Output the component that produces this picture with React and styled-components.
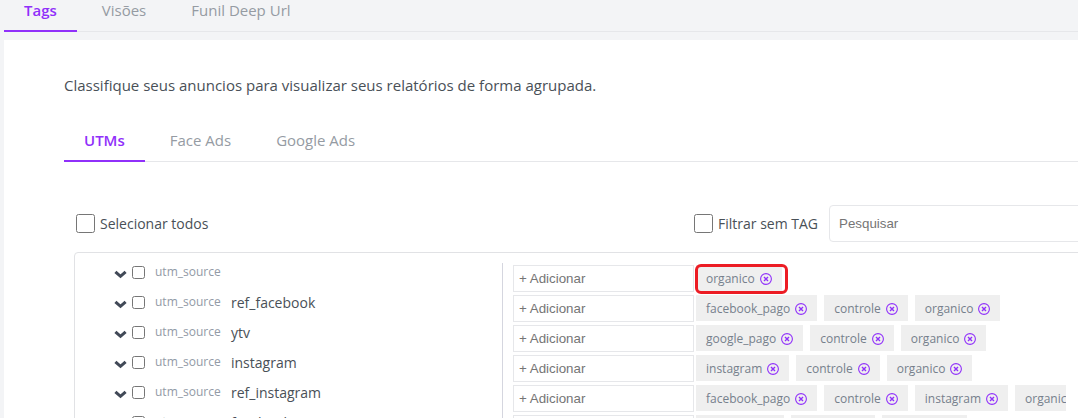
import React, { useState } from "react";

import styled, { createGlobalStyle, css } from "styled-components";

const GlobalStyle = createGlobalStyle`
  * {
    box-sizing: border-box;
  }

  body {
    margin: 0;
    background-color: #f3f4f6;
    color: #495057;
    font-family: "Open Sans", sans-serif;
    font-size: 15px;
    line-height: 22px;
    overflow: hidden;
  }
`;

const Page = styled.div`
  padding-left: 4px;
  overflow: hidden;
`;

const Tabs = styled.nav`
  display: flex;
  column-gap: 5px;
  box-shadow: inset 0 -1px 0 #e6e7ea;
`;

const Tab = styled.button`
  border: 0;
  border-bottom: 2px solid transparent;
  background: none;
  padding: 0 20px 10px;
  font: inherit;
  line-height: 20px;
  color: #959ba3;
  cursor: pointer;

  ${(props) =>
    props.$active &&
    css`
      border-color: #9030fa;
      color: #9030fa;
      font-weight: 600;
    `}
`;

const Card = styled.main`
  margin-top: 8px;
  margin-right: -24px;
  padding: 34px 0 0 60px;
  background-color: #fff;
`;

const Description = styled.p`
  margin: 0 0 34px;
`;

const Toolbar = styled.div`
  display: flex;
  align-items: center;
  margin-top: 43px;
  margin-bottom: 10px;
  padding-left: 12px;
`;

const CheckLabel = styled.label`
  display: flex;
  align-items: center;
  column-gap: 5px;
  font-size: 14px;
  white-space: nowrap;

  input {
    width: 19px;
    height: 19px;
    margin: 0;
  }
`;

const Filters = styled.div`
  display: flex;
  flex: 0 0 408px;
  column-gap: 11px;
  margin-left: auto;
`;

const SearchInput = styled.input`
  flex: 1;
  min-width: 0;
  height: 37px;
  padding: 0 9px;
  border: 1px solid #e6e7ea;
  border-radius: 4px;
  font-family: "Liberation Sans", sans-serif;
`;

const Panel = styled.section`
  display: grid;
  grid-template-columns: 428px minmax(0, 1fr);
  margin-left: 10px;
  padding: 10px 35px 10px 0;
  border: 1px solid #e1e2e5;
  border-radius: 4px;
`;

const Sources = styled.div`
  padding-left: 39px;
  border-right: 1px solid #d5d6df;
`;

const SourceRow = styled.div`
  display: flex;
  align-items: center;
  height: 30px;
  padding-bottom: 12px;
`;

const ExpandButton = styled.button`
  display: flex;
  margin-right: 5px;
  padding: 5px 0 0;
  border: 0;
  background: none;
  color: #414957;
  cursor: pointer;
`;

const SourceLabel = styled.label`
  display: flex;
  align-items: center;

  input {
    width: 13px;
    height: 13px;
    margin: 0 10px 0 0;
  }
`;

const SourceKind = styled.span`
  width: 76px;
  font-size: 12px;
  color: #929aa6;
`;

const SourceName = styled.span`
  padding-top: 2px;
  font-size: 14px;
`;

const TagRows = styled.div`
  padding: 2px 0 0 10px;
`;

const TagRow = styled.div`
  display: flex;
  align-items: flex-start;
  column-gap: 2px;
  height: 30px;
`;

const AddInput = styled.input`
  flex: 0 0 181px;
  min-width: 0;
  height: 27px;
  padding: 0 5px;
  border: 1px solid #e6e7ea;
  font-family: "Liberation Sans", sans-serif;
`;

const TagList = styled.div`
  display: flex;
  column-gap: 7px;
  min-width: 0;
  height: 30px;
  overflow: ${(props) => (props.$marked ? "visible" : "hidden")};
`;

const Chip = styled.span`
  display: flex;
  flex: none;
  align-items: center;
  column-gap: 5px;
  position: relative;
  height: 26px;
  padding: 2px 10px 0;
  background-color: #efefef;
  color: #76808c;
  font-size: 12px;

  ${(props) =>
    props.$marked &&
    css`
      &::after {
        content: "";
        position: absolute;
        inset: -1px -6px -3px -1px;
        border: 3px solid #ec1c24;
        border-radius: 6px;
        pointer-events: none;
      }
    `}
`;

const RemoveButton = styled.button`
  display: flex;
  padding: 0;
  border: 0;
  background: none;
  color: #9030fa;
  cursor: pointer;
`;

const ChevronIcon = () => (
  <svg width="13" height="9" viewBox="0 0 13 9" aria-hidden="true">
    <path
      d="M1.4 1.9 6.5 6.3 11.6 1.9"
      fill="none"
      stroke="currentColor"
      strokeWidth="3.1"
    />
  </svg>
);

const RemoveIcon = () => (
  <svg
    width="12"
    height="12"
    viewBox="0 0 12 12"
    fill="none"
    stroke="currentColor"
    aria-hidden="true"
  >
    <circle cx="6" cy="6" r="5.4" strokeWidth="1.1" />
    <path d="M4 4 8 8M8 4 4 8" strokeWidth="1.4" />
  </svg>
);

const TabBar = ({ items }) => {
  const [active, setActive] = useState(items[0]);

  return (
    <Tabs>
      {items.map((item) => (
        <Tab
          key={item}
          type="button"
          $active={item === active}
          onClick={() => setActive(item)}
        >
          {item}
        </Tab>
      ))}
    </Tabs>
  );
};

const sources = [
  { name: "", tags: ["organico"], marked: true },
  { name: "ref_facebook", tags: ["facebook_pago", "controle", "organico"] },
  { name: "ytv", tags: ["google_pago", "controle", "organico"] },
  { name: "instagram", tags: ["instagram", "controle", "organico"] },
  {
    name: "ref_instagram",
    tags: ["facebook_pago", "controle", "instagram", "organico"],
  },
  { name: "facebook", tags: ["facebook", "controle", "organico"] },
];

const App = () => {
  const [rows, setRows] = useState(sources);

  const removeTag = (rowIndex, tag) => {
    setRows(
      rows.map((row, index) =>
        index === rowIndex
          ? { ...row, tags: row.tags.filter((item) => item !== tag) }
          : row
      )
    );
  };

  return (
    <Page>
      <GlobalStyle />
      <TabBar items={["Tags", "Visões", "Funil Deep Url"]} />
      <Card>
        <Description>
          Classifique seus anuncios para visualizar seus relatórios de forma
          agrupada.
        </Description>
        <TabBar items={["UTMs", "Face Ads", "Google Ads"]} />
        <Toolbar>
          <CheckLabel>
            <input type="checkbox" />
            Selecionar todos
          </CheckLabel>
          <Filters>
            <CheckLabel>
              <input type="checkbox" />
              Filtrar sem TAG
            </CheckLabel>
            <SearchInput placeholder="Pesquisar" aria-label="Pesquisar" />
          </Filters>
        </Toolbar>
        <Panel>
          <Sources>
            {rows.map((row, index) => (
              <SourceRow key={index}>
                <ExpandButton type="button" aria-label="Expandir">
                  <ChevronIcon />
                </ExpandButton>
                <SourceLabel>
                  <input type="checkbox" />
                  <SourceKind>utm_source</SourceKind>
                  <SourceName>{row.name}</SourceName>
                </SourceLabel>
              </SourceRow>
            ))}
          </Sources>
          <TagRows>
            {rows.map((row, index) => (
              <TagRow key={index}>
                <AddInput placeholder="+ Adicionar" aria-label="Adicionar" />
                <TagList $marked={row.marked}>
                  {row.tags.map((tag) => (
                    <Chip key={tag} $marked={row.marked}>
                      {tag}
                      <RemoveButton
                        type="button"
                        aria-label={`Remover ${tag}`}
                        onClick={() => removeTag(index, tag)}
                      >
                        <RemoveIcon />
                      </RemoveButton>
                    </Chip>
                  ))}
                </TagList>
              </TagRow>
            ))}
          </TagRows>
        </Panel>
      </Card>
    </Page>
  );
};

export default App;
